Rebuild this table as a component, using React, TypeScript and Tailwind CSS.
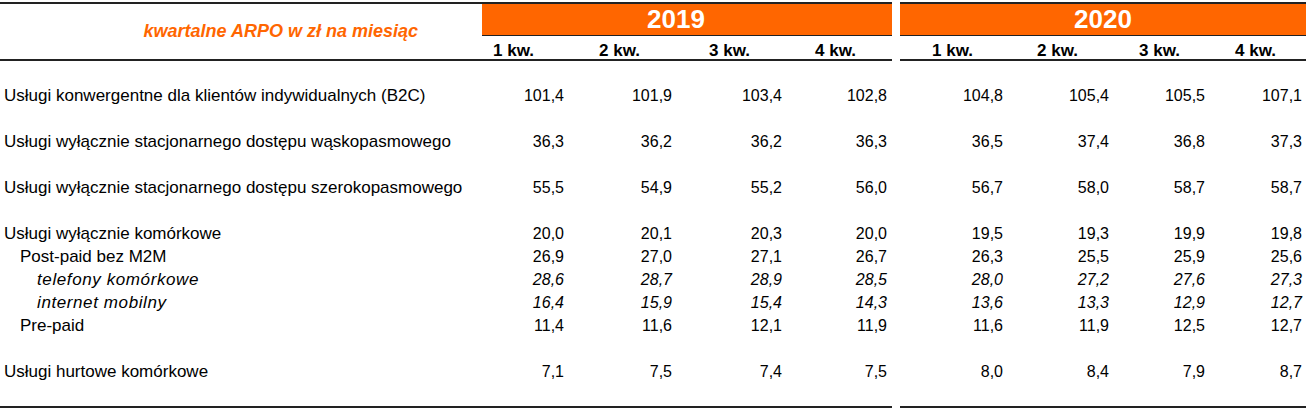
import React from 'react';

type Row = {
  label: string;
  values: string[];
  level: 0 | 1 | 2;
  gapBefore?: boolean;
};

const rows: Row[] = [
  {
    label: 'Usługi konwergentne dla klientów indywidualnych (B2C)',
    values: ['101,4', '101,9', '103,4', '102,8', '104,8', '105,4', '105,5', '107,1'],
    level: 0,
  },
  {
    label: 'Usługi wyłącznie stacjonarnego dostępu wąskopasmowego',
    values: ['36,3', '36,2', '36,2', '36,3', '36,5', '37,4', '36,8', '37,3'],
    level: 0,
    gapBefore: true,
  },
  {
    label: 'Usługi wyłącznie stacjonarnego dostępu szerokopasmowego',
    values: ['55,5', '54,9', '55,2', '56,0', '56,7', '58,0', '58,7', '58,7'],
    level: 0,
    gapBefore: true,
  },
  {
    label: 'Usługi wyłącznie komórkowe',
    values: ['20,0', '20,1', '20,3', '20,0', '19,5', '19,3', '19,9', '19,8'],
    level: 0,
    gapBefore: true,
  },
  {
    label: 'Post-paid bez M2M',
    values: ['26,9', '27,0', '27,1', '26,7', '26,3', '25,5', '25,9', '25,6'],
    level: 1,
  },
  {
    label: 'telefony komórkowe',
    values: ['28,6', '28,7', '28,9', '28,5', '28,0', '27,2', '27,6', '27,3'],
    level: 2,
  },
  {
    label: 'internet mobilny',
    values: ['16,4', '15,9', '15,4', '14,3', '13,6', '13,3', '12,9', '12,7'],
    level: 2,
  },
  {
    label: 'Pre-paid',
    values: ['11,4', '11,6', '12,1', '11,9', '11,6', '11,9', '12,5', '12,7'],
    level: 1,
  },
  {
    label: 'Usługi hurtowe komórkowe',
    values: ['7,1', '7,5', '7,4', '7,5', '8,0', '8,4', '7,9', '8,7'],
    level: 0,
    gapBefore: true,
  },
];

// right edges of the number columns follow the sheet
const colWidths = [
  'w-[82px]',
  'w-[108px]',
  'w-[110px]',
  'w-[105px]',
  'w-[116px]',
  'w-[106px]',
  'w-[96px]',
  'w-[97px]',
];

const indent = ['pl-[4px]', 'pl-[20px]', 'pl-[37px] tracking-[0.6px]'];

function DataRow({ row }: { row: Row }) {
  return (
    <>
      {row.gapBefore && <div className="h-[23px]" />}
      <div className={row.level === 2 ? 'flex h-[23px] items-center italic' : 'flex h-[23px] items-center'}>
        <div className={`w-[482px] shrink-0 text-[17px] ${indent[row.level]}`}>{row.label}</div>
        {row.values.map((v, i) => (
          <div key={i} className={`${colWidths[i]} shrink-0 text-right`}>
            {v}
          </div>
        ))}
      </div>
    </>
  );
}

export default function App() {
  return (
    <div className="w-[1309px] h-[411px] bg-white pt-[2px] text-[16px] text-black font-['Liberation_Sans',Arial,sans-serif] overflow-hidden">
      {/* header */}
      <div className="flex">
        <div className="flex w-[892px] shrink-0 border-t-2 border-b-2 border-[#222]">
          <div className="flex w-[482px] shrink-0 items-center justify-end pr-[64px] text-[18px] font-bold italic text-[#ff6600]">
            kwartalne ARPO w zł na miesiąc
          </div>
          <div className="flex w-[410px] flex-col">
            <div className="flex h-[31px] items-center justify-center bg-[#ff6600] pr-[22px] text-[26px] font-bold text-white">
              2019
            </div>
            <div className="h-px bg-[#222]" />
            <div className="flex h-[23px] items-center pl-[11px] pt-[6px] text-[17px] font-bold">
              <div className="w-[106px]">1 kw.</div>
              <div className="w-[110px]">2 kw.</div>
              <div className="w-[106px]">3 kw.</div>
              <div>4 kw.</div>
            </div>
          </div>
        </div>
        <div className="ml-[8px] flex w-[406px] shrink-0 flex-col border-t-2 border-b-2 border-[#222]">
          <div className="flex h-[31px] items-center justify-center bg-[#ff6600] text-[26px] font-bold text-white">
            2020
          </div>
          <div className="h-px bg-[#222]" />
          <div className="flex h-[23px] items-center pl-[32px] pt-[6px] text-[17px] font-bold">
            <div className="w-[105px]">1 kw.</div>
            <div className="w-[102px]">2 kw.</div>
            <div className="w-[96px]">3 kw.</div>
            <div>4 kw.</div>
          </div>
        </div>
      </div>

      {/* body */}
      <div className="pt-[23px]">
        {rows.map((row) => (
          <DataRow key={row.label} row={row} />
        ))}
        <div className="h-[23px]" />
      </div>

      {/* bottom rule */}
      <div className="flex">
        <div className="w-[892px] shrink-0 border-t-2 border-[#222]" />
        <div className="ml-[8px] w-[406px] shrink-0 border-t-2 border-[#222]" />
      </div>
    </div>
  );
}
